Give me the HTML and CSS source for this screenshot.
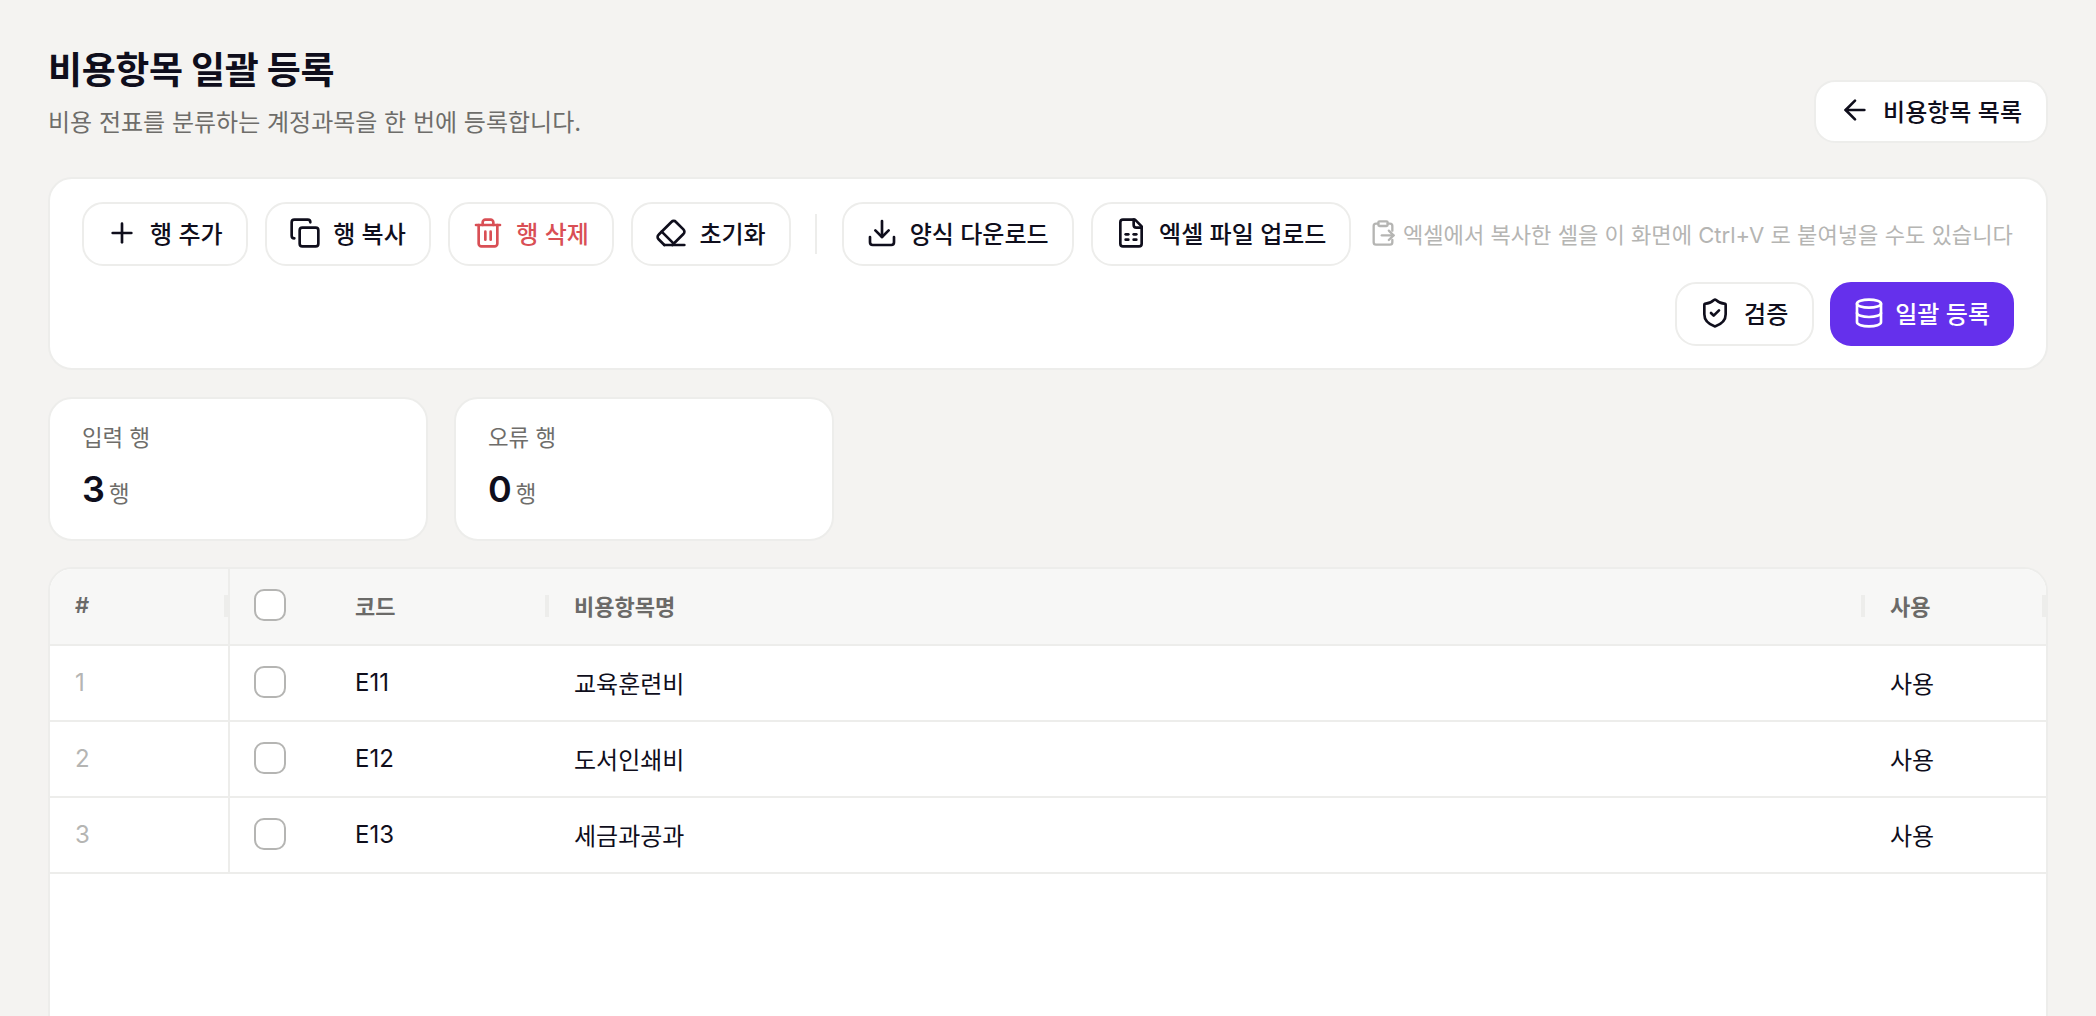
FILE: index.html
```html
<!DOCTYPE html>
<html lang="ko">
<head>
    <meta charset="utf-8">
    <title>비용항목 일괄 등록</title>
    <link rel="stylesheet" href="styles.css">
</head>
<body>
    <div class="page">
        <div class="page-head">
            <div class="head-text">
                <h1>비용항목 일괄 등록</h1>
                <p>비용 전표를 분류하는 계정과목을 한 번에 등록합니다.</p>
            </div>
            <button class="button back-btn">
                <svg class="icon" viewBox="0 0 24 24"><path d="m12 19-7-7 7-7"/><path d="M19 12H5"/></svg>
                비용항목 목록
            </button>
        </div>

        <div class="toolbar">
            <div class="tool-row">
                <button class="button">
                    <svg class="icon" viewBox="0 0 24 24"><path d="M5 12h14"/><path d="M12 5v14"/></svg>
                    행 추가
                </button>
                <button class="button">
                    <svg class="icon" viewBox="0 0 24 24"><rect x="8" y="8" width="14" height="14" rx="2"/><path d="M4 16c-1.1 0-2-.9-2-2V4c0-1.1.9-2 2-2h10c1.1 0 2 .9 2 2"/></svg>
                    행 복사
                </button>
                <button class="button danger-btn">
                    <svg class="icon" viewBox="0 0 24 24"><path d="M3 6h18"/><path d="M19 6v14c0 1-1 2-2 2H7c-1 0-2-1-2-2V6"/><path d="M8 6V4c0-1 1-2 2-2h4c1 0 2 1 2 2v2"/><path d="M10 11v6"/><path d="M14 11v6"/></svg>
                    행 삭제
                </button>
                <button class="button">
                    <svg class="icon" viewBox="0 0 24 24"><path d="m7 21-4.3-4.3c-1-1-1-2.5 0-3.4l9.6-9.6c1-1 2.5-1 3.4 0l5.6 5.6c1 1 1 2.5 0 3.4L13 21"/><path d="M22 21H7"/><path d="m5 11 9 9"/></svg>
                    초기화
                </button>
                <span class="divider"></span>
                <button class="button">
                    <svg class="icon" viewBox="0 0 24 24"><path d="M21 15v4a2 2 0 0 1-2 2H5a2 2 0 0 1-2-2v-4"/><path d="m7 10 5 5 5-5"/><path d="M12 15V3"/></svg>
                    양식 다운로드
                </button>
                <button class="button">
                    <svg class="icon" viewBox="0 0 24 24"><path d="M15 2H6a2 2 0 0 0-2 2v16a2 2 0 0 0 2 2h12a2 2 0 0 0 2-2V7Z"/><path d="M14 2v4a2 2 0 0 0 2 2h4"/><path d="M8 13h2"/><path d="M14 13h2"/><path d="M8 17h2"/><path d="M14 17h2"/></svg>
                    엑셀 파일 업로드
                </button>
                <span class="hint">
                    <svg class="icon" viewBox="0 0 24 24"><rect x="8" y="2" width="8" height="4" rx="1"/><path d="M8 4H6a2 2 0 0 0-2 2v14a2 2 0 0 0 2 2h12a2 2 0 0 0 2-2v-2"/><path d="M16 4h2a2 2 0 0 1 2 2v4"/><path d="M11 14h10"/><path d="m17 10 4 4-4 4"/></svg>
                    엑셀에서 복사한 셀을 이 화면에 Ctrl+V 로 붙여넣을 수도 있습니다
                </span>
            </div>
            <div class="tool-row tool-row-end">
                <button class="button check-btn">
                    <svg class="icon" viewBox="0 0 24 24"><path d="M20 13c0 5-3.5 7.5-7.66 8.95a1 1 0 0 1-.67-.01C7.5 20.5 4 18 4 13V6a1 1 0 0 1 1-1c2 0 4.5-1.2 6.24-2.72a1.17 1.17 0 0 1 1.52 0C14.51 3.81 17 5 19 5a1 1 0 0 1 1 1z"/><path d="m9 12 2 2 4-4"/></svg>
                    검증
                </button>
                <button class="button primary-btn">
                    <svg class="icon" viewBox="0 0 24 24"><ellipse cx="12" cy="5" rx="9" ry="3"/><path d="M3 5v14a9 3 0 0 0 18 0V5"/><path d="M3 12a9 3 0 0 0 18 0"/></svg>
                    일괄 등록
                </button>
            </div>
        </div>

        <div class="stat-cards">
            <div class="stat-card">
                <div class="stat-label">입력 행</div>
                <div class="stat-value"><strong>3</strong><span>행</span></div>
            </div>
            <div class="stat-card">
                <div class="stat-label">오류 행</div>
                <div class="stat-value"><strong>0</strong><span>행</span></div>
            </div>
        </div>

        <div class="sheet">
            <div class="sheet-row sheet-head">
                <div class="cell cell-no resize">#</div>
                <div class="cell cell-check"><span class="check"></span></div>
                <div class="cell resize">코드</div>
                <div class="cell resize">비용항목명</div>
                <div class="cell resize">사용</div>
            </div>
            <div class="sheet-row">
                <div class="cell cell-no">1</div>
                <div class="cell cell-check"><span class="check"></span></div>
                <div class="cell">E11</div>
                <div class="cell">교육훈련비</div>
                <div class="cell">사용</div>
            </div>
            <div class="sheet-row">
                <div class="cell cell-no">2</div>
                <div class="cell cell-check"><span class="check"></span></div>
                <div class="cell">E12</div>
                <div class="cell">도서인쇄비</div>
                <div class="cell">사용</div>
            </div>
            <div class="sheet-row">
                <div class="cell cell-no">3</div>
                <div class="cell cell-check"><span class="check"></span></div>
                <div class="cell">E13</div>
                <div class="cell">세금과공과</div>
                <div class="cell">사용</div>
            </div>
        </div>
    </div>
</body>
</html>
```

FILE: styles.css
```css
html, body {
    height: 100%;
    overflow: hidden;
}
body {
    margin: 0;
    background-color: #f4f3f1;
    color: #0f0e1c;
    font-family: Inter, 'Noto Sans CJK KR', sans-serif;
}
.page {
    padding: 47px 48px 0;
}
.page-head {
    display: flex;
    justify-content: space-between;
    align-items: flex-end;
    margin-bottom: 34px;
}
h1 {
    margin: 0;
    font-size: 37px;
    line-height: 48px;
    font-weight: 700;
    letter-spacing: -0.01em;
}
.head-text p {
    margin: 7px 0 0;
    font-size: 24px;
    line-height: 41px;
    color: #6e6d6a;
}
.button {
    display: inline-flex;
    align-items: center;
    gap: 12px;
    height: 64px;
    padding: 0 23px 3px 22px;
    border: 2px solid #ededeb;
    border-radius: 21px;
    background: white;
    color: #0f0e1c;
    font-family: inherit;
    font-size: 24px;
    font-weight: 500;
    white-space: nowrap;
}
.icon {
    width: 32px;
    height: 32px;
    flex: none;
    fill: none;
    stroke: currentColor;
    stroke-width: 2;
    stroke-linecap: round;
    stroke-linejoin: round;
}
.back-btn {
    height: 63px;
    padding-left: 23px;
    padding-right: 24px;
}
.danger-btn {
    color: #d94f55;
}
.check-btn {
    gap: 13px;
    padding-right: 24px;
}
.primary-btn {
    gap: 10px;
    padding-left: 21px;
    padding-right: 22px;
    border-color: #6530ec;
    background: #6530ec;
    color: white;
}
.toolbar {
    display: flex;
    flex-direction: column;
    gap: 16px;
    padding: 23px 32px 22px;
    border: 2px solid #ededeb;
    border-radius: 24px;
    background: white;
}
.tool-row {
    display: flex;
    align-items: center;
    gap: 17.5px;
}
.tool-row-end {
    justify-content: flex-end;
    gap: 16px;
}
.divider {
    width: 2px;
    height: 40px;
    margin: 0 7px;
    background: #ededeb;
}
.hint {
    display: inline-flex;
    align-items: center;
    gap: 6px;
    padding-bottom: 3px;
    font-size: 22.1px;
    color: #b5b5b3;
    white-space: nowrap;
}
.hint .icon {
    width: 28px;
    height: 28px;
}
.stat-cards {
    display: flex;
    gap: 26px;
    margin-top: 27px;
}
.stat-card {
    box-sizing: border-box;
    width: 380px;
    height: 144px;
    padding: 23px 32px;
    border: 2px solid #ededeb;
    border-radius: 24px;
    background: white;
}
.stat-label {
    font-size: 22.4px;
    line-height: 32px;
    color: #6e6d6a;
}
.stat-value {
    margin-top: 11px;
    line-height: 48px;
}
.stat-value strong {
    font-size: 36px;
    font-weight: 600;
}
.stat-value span {
    margin-left: 4px;
    font-size: 22.4px;
    color: #6e6d6a;
}
.sheet {
    height: 700px;
    margin-top: 26px;
    border: 2px solid #ededeb;
    border-radius: 24px;
    background: white;
    overflow: hidden;
}
.sheet-row {
    display: grid;
    grid-template-columns: 180px 100px 219px 1fr 181px;
    height: 76px;
    box-sizing: border-box;
    border-bottom: 2px solid #ededeb;
    font-size: 24px;
}
.sheet-head {
    height: 77px;
    background: #f7f7f6;
    font-size: 22px;
    font-weight: 600;
    color: #6b6a68;
}
.cell {
    position: relative;
    display: flex;
    align-items: center;
    padding-left: 25px;
    padding-bottom: 2px;
}
.sheet-head .cell {
    padding-bottom: 3px;
}
.cell-check,
.sheet-head .cell-check {
    padding-left: 24px;
}
.cell-no {
    border-right: 2px solid #ededeb;
    color: #b5b5b3;
}
.sheet-head .cell-no {
    color: #6b6a68;
}
.resize::after {
    content: "";
    position: absolute;
    top: 26px;
    right: 0;
    width: 4px;
    height: 22px;
    background: #ededeb;
}
.check {
    display: block;
    box-sizing: border-box;
    width: 32px;
    height: 32px;
    border: 2px solid #b5b5b3;
    border-radius: 10px;
    background: white;
}
```
